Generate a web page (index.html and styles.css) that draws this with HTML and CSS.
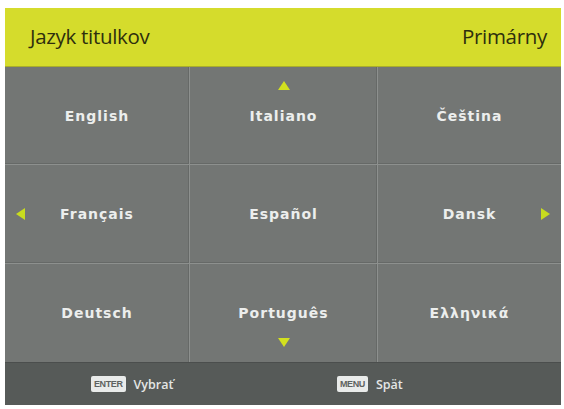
FILE: index.html
```html
<!DOCTYPE html>
<html>
<head>
<meta charset="utf-8">
<link rel="stylesheet" href="styles.css">
</head>
<body>
<div class="panel">
  <div class="header">
    <span class="title">Jazyk titulkov</span>
    <span class="title">Primárny</span>
  </div>
  <div class="grid">
    <div class="cell">English</div>
    <div class="cell">Italiano<span class="arrow up"></span></div>
    <div class="cell last">Čeština</div>
    <div class="cell">Français<span class="arrow left"></span></div>
    <div class="cell">Español</div>
    <div class="cell last">Dansk<span class="arrow right"></span></div>
    <div class="cell bottom">Deutsch</div>
    <div class="cell bottom">Português<span class="arrow down"></span></div>
    <div class="cell bottom last">Ελληνικά</div>
  </div>
  <div class="footer">
    <div class="hint"><span class="key">ENTER</span><span class="label">Vybrať</span></div>
    <div class="hint"><span class="key">MENU</span><span class="label">Spät</span></div>
  </div>
</div>
</body>
</html>
```
FILE: styles.css
```css
html, body {
  margin: 0;
  background: #ffffff;
}
body {
  padding: 8px 3px 0 5px;
}
.panel {
  width: 556px;
  display: flex;
  flex-direction: column;
}
.header {
  height: 59px;
  background: #d5dc2c;
  display: flex;
  justify-content: space-between;
  align-items: center;
  padding: 0 14px 0 25px;
  box-sizing: border-box;
  border-bottom: 1px solid #a9ae2a;
}
.title {
  font-family: "Open Sans", "Liberation Sans", sans-serif;
  font-size: 20.5px;
  font-weight: 500;
  color: #2e2f0e;
  letter-spacing: -0.3px;
  padding-bottom: 2px;
}
.grid {
  display: grid;
  grid-template-columns: 185px 188px 183px;
  grid-template-rows: 98px 99px 98px;
  background: #6f7371;
}
.cell {
  position: relative;
  display: flex;
  align-items: center;
  justify-content: center;
  font-family: "DejaVu Sans", Verdana, sans-serif;
  font-weight: bold;
  font-size: 14px;
  letter-spacing: 1px;
  color: #eceeed;
  background: #737674;
  border-right: 1px solid #8d908e;
  border-bottom: 1px solid #8d908e;
  box-shadow: inset -1px -1px 0 #666967;
}
.cell.last {
  border-right: none;
  box-shadow: inset 0 -1px 0 #666967;
}
.cell.bottom {
  border-bottom: none;
  box-shadow: inset -1px 0 0 #666967;
}
.cell.bottom.last {
  box-shadow: none;
}
.arrow {
  position: absolute;
  width: 0;
  height: 0;
}
.arrow.up {
  top: 14px;
  left: 50%;
  margin-left: -6px;
  border-left: 6px solid transparent;
  border-right: 6px solid transparent;
  border-bottom: 9px solid #d2e01e;
}
.arrow.down {
  bottom: 15px;
  left: 50%;
  margin-left: -6px;
  border-left: 6px solid transparent;
  border-right: 6px solid transparent;
  border-top: 9px solid #d2e01e;
}
.arrow.left {
  left: 11px;
  top: 50%;
  margin-top: -6px;
  border-top: 6px solid transparent;
  border-bottom: 6px solid transparent;
  border-right: 9px solid #c8dc1e;
}
.arrow.right {
  right: 11px;
  top: 50%;
  margin-top: -6px;
  border-top: 6px solid transparent;
  border-bottom: 6px solid transparent;
  border-left: 9px solid #c8dc1e;
}
.footer {
  height: 43px;
  background: #565a58;
  border-top: 1px solid #4b4e4d;
  display: grid;
  grid-template-columns: 1fr 1fr;
  align-items: center;
  box-sizing: border-box;
}
.hint {
  display: flex;
  align-items: center;
  padding-left: 86px;
}
.hint + .hint {
  padding-left: 54px;
}
.key {
  font-family: "Liberation Sans", sans-serif;
  font-weight: bold;
  font-size: 9px;
  line-height: 10px;
  color: #5e6260;
  background: #e9ebea;
  border-radius: 2px;
  padding: 3px 3px;
  letter-spacing: -0.4px;
  margin-right: 8px;
}
.label {
  font-family: "Open Sans", "Liberation Sans", sans-serif;
  font-size: 12.5px;
  font-weight: 600;
  color: #e4e6e5;
}
```
